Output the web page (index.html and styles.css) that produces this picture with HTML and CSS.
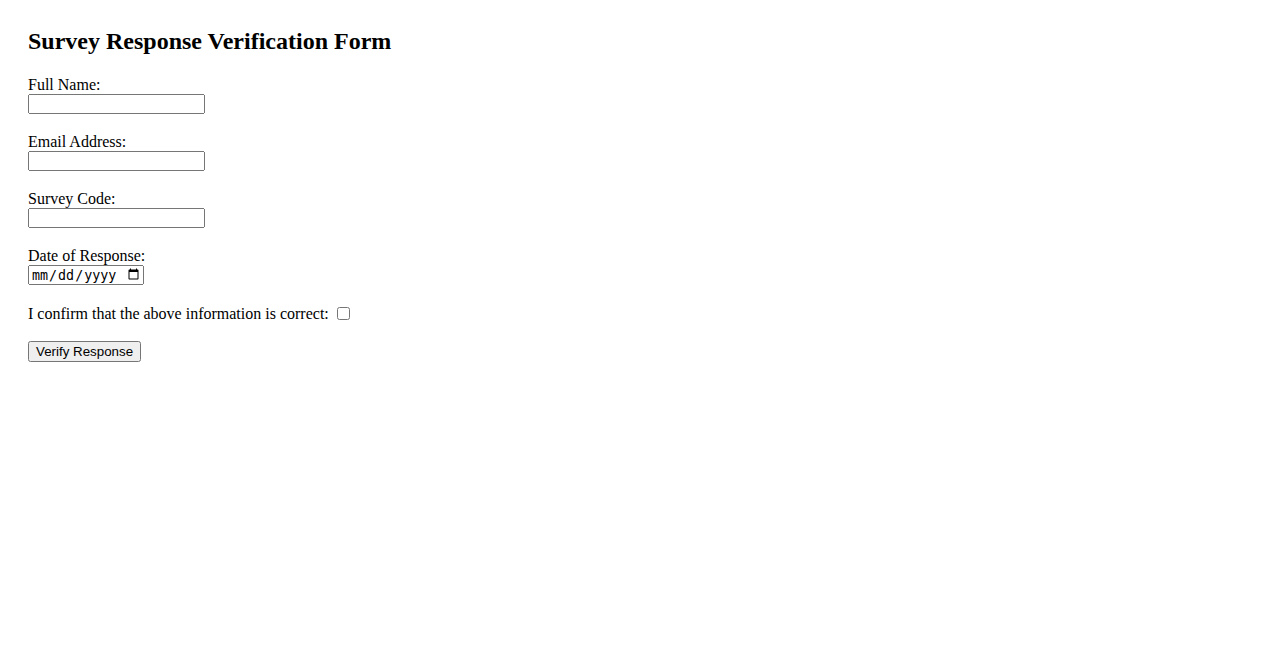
FILE: index.html
```html
<!DOCTYPE html>
<html>
<head>
<meta charset="utf-8">
<title>Survey Response Verification Form</title>
<link rel="stylesheet" href="styles.css">
</head>
<body>
<div class="page">
  <h2 class="title">Survey Response Verification Form</h2>
  <form class="form">
    <div class="field">
      <label class="label" for="name">Full Name:</label>
      <input class="text" type="text" id="name">
    </div>
    <div class="field">
      <label class="label" for="email">Email Address:</label>
      <input class="text" type="email" id="email">
    </div>
    <div class="field">
      <label class="label" for="code">Survey Code:</label>
      <input class="text" type="text" id="code">
    </div>
    <div class="field">
      <label class="label" for="date">Date of Response:</label>
      <input class="date" type="date" id="date">
    </div>
    <div class="confirm">
      <label class="confirm-label" for="ok">I confirm that the above information is correct:</label>
      <input class="check" type="checkbox" id="ok">
    </div>
    <div class="actions">
      <button class="btn" type="button">Verify Response</button>
    </div>
  </form>
</div>
</body>
</html>
```
FILE: styles.css
```css
body {
  margin: 0;
  font-family: "Liberation Serif", "Times New Roman", serif;
  font-size: 16px;
  color: #000;
  background: #fff;
}
.page {
  padding: 28px;
}
.title {
  margin: 0 0 22px;
  font-size: 24px;
  line-height: 26px;
  font-weight: bold;
}
.form {
  display: flex;
  flex-direction: column;
  align-items: flex-start;
}
.field {
  display: flex;
  flex-direction: column;
  align-items: flex-start;
  margin-bottom: 19px;
}
.label {
  display: block;
  line-height: 18px;
}
.text {
  width: 177px;
  height: 20px;
  box-sizing: border-box;
  margin: 0;
}
.date {
  width: 116px;
  height: 20px;
  box-sizing: border-box;
  margin: 0;
}
.confirm {
  display: flex;
  align-items: center;
  height: 19px;
  margin-bottom: 18px;
}
.confirm-label {
  line-height: 18px;
}
.check {
  margin: 0 3px 0 8px;
  width: 13px;
  height: 13px;
}
.btn {
  margin: 0;
}
```
